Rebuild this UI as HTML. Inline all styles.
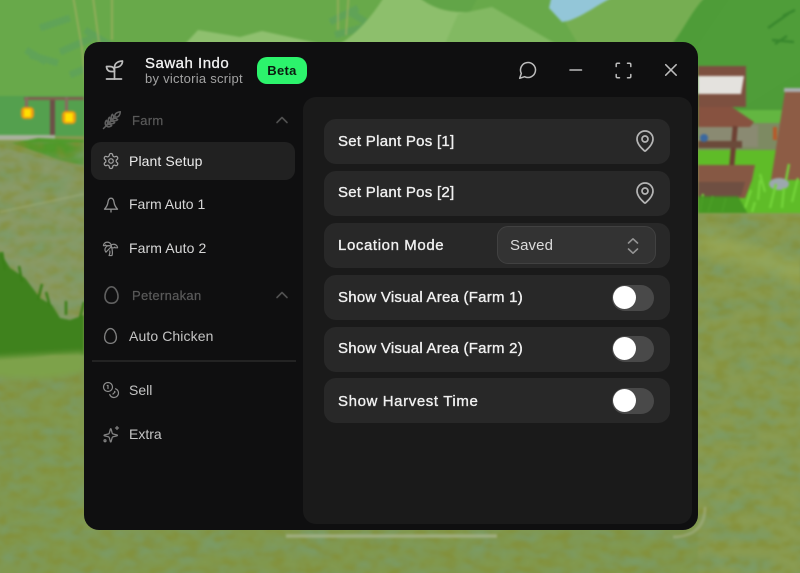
<!DOCTYPE html>
<html lang="en"><head><meta charset="utf-8"><title>Sawah Indo</title>
<style>
html,body{margin:0;padding:0;background:#7f9a55}
#root{position:relative;width:800px;height:573px;overflow:hidden;font-family:"Liberation Sans",sans-serif}
#bg{position:absolute;left:0;top:0}
.abs{position:absolute}
#win{position:absolute;left:84px;top:42px;width:614px;height:488px;border-radius:15px;background:#0f0f10}
#panel{position:absolute;left:303px;top:97px;width:389px;height:427px;border-radius:13px;background:#1a1a1a}
.row{position:absolute;left:324px;width:346px;height:45px;border-radius:12px;background:#282828}
.rt{position:absolute;left:338px;color:#f0f0f0;font-size:15px;line-height:20px;white-space:nowrap;-webkit-text-stroke:.35px #f0f0f0}
.nav{position:absolute;left:129px;color:#d6d6d6;font-size:14px;line-height:18px;white-space:nowrap;letter-spacing:.1px}
.sec{position:absolute;left:132px;color:#5a5a5a;font-size:13px;line-height:16px;white-space:nowrap;letter-spacing:.3px;-webkit-text-stroke:.2px #5a5a5a}
.tr{position:absolute;left:612px;width:42px;height:26px;border-radius:13px;background:#494949}
.kn{position:absolute;left:613px;width:23px;height:23px;border-radius:50%;background:#fff}
svg.i{position:absolute;fill:none;stroke-linecap:round;stroke-linejoin:round}
</style></head><body><div id="root">
<svg id="bg" width="800" height="573" viewBox="0 0 800 573">
<defs>
<filter id="all" filterUnits="userSpaceOnUse" x="-20" y="-20" width="840" height="613" color-interpolation-filters="sRGB"><feGaussianBlur stdDeviation="1"/></filter>
<filter id="b3" x="-30%" y="-30%" width="160%" height="160%" color-interpolation-filters="sRGB"><feGaussianBlur stdDeviation="3"/></filter>
<filter id="b8" filterUnits="userSpaceOnUse" x="0" y="0" width="800" height="573" color-interpolation-filters="sRGB"><feGaussianBlur stdDeviation="7"/></filter>
<filter id="tex" filterUnits="userSpaceOnUse" x="-20" y="0" width="840" height="600" color-interpolation-filters="sRGB"><feTurbulence type="fractalNoise" baseFrequency=".03 .07" numOctaves="3" seed="7"/><feColorMatrix type="matrix" values="0 0 0 0 .48  0 0 0 0 .61  0 0 0 0 .41  3 0 0 0 -1.2"/><feGaussianBlur stdDeviation="1.2"/></filter>
<filter id="tex2" filterUnits="userSpaceOnUse" x="-20" y="0" width="840" height="600" color-interpolation-filters="sRGB"><feTurbulence type="fractalNoise" baseFrequency=".07 .12" numOctaves="3" seed="21"/><feColorMatrix type="matrix" values="0 0 0 0 .52  0 0 0 0 .55  0 0 0 0 .18  0 3 0 0 -1.3"/><feGaussianBlur stdDeviation="1"/></filter>
<clipPath id="gclip"><path d="M-20 142H84V530H698V214H820V590H-20Z"/></clipPath>
</defs>
<g filter="url(#all)">
<rect x="-20" y="-20" width="840" height="613" fill="#84994f"/>
<rect x="-20" y="-20" width="840" height="156" fill="#68a94a"/>
<!-- foliage stripes -->
<g stroke="#5a9f62" stroke-width="7" fill="none" opacity=".55">
<path d="M40 28l30-10M60 52l32-14M30 55l28 8M26 50l20 12M85 30l30 18M70 75l24-10"/>
<path d="M330 22l28-14M335 35l30-8M350 12l22 14"/>
</g>
<g stroke="#a6b063" stroke-width="1.600" fill="none" opacity=".8">
<path d="M72 -10l10 58 4 40M92 -10l8 60M112 -10v50M349 -10l-3 45M338 -10v40"/>
</g>
<!-- tent / hills -->
<path d="M185 44L198 30 240 37 262 31 322 44Z" fill="#8fc06f"/>
<path d="M340 44Q368 26 388 -10H412Q432 14 470 12L492 7 556 44Z" fill="#8dbf6c"/>
<path d="M412 -10Q432 14 470 12L482 -10Z" fill="#62a548"/>
<path d="M445 44L458 14 492 7 556 44Z" fill="#82b962"/>
<path d="M553 -10H622L592 17 562 22 549 8Z" fill="#93c6d8"/>
<path d="M565 22C592 14 612 -10 640 -10H715L680 44H578Z" fill="#76ae52"/>
<path d="M672 44C688 25 700 -10 722 -10H820V140H698Z" fill="#4e9c38"/>
<path d="M698 44V132C730 118 770 90 820 60V-10H735Z" fill="#4f9d39"/>
<g stroke="#2f7d28" stroke-width="2.500" fill="none" opacity=".7">
<path d="M768 28l20-14M772 40l22 2M775 44l12-8M795 10l-12 6"/>
</g>
<!-- stall -->
<rect x="698" y="122" width="122" height="50" fill="#7d8a62"/>
<rect x="730" y="110" width="60" height="13" fill="#63b641"/>
<rect x="698" y="125" width="60" height="22" fill="#8a8a72"/>
<rect x="698" y="150" width="122" height="70" fill="#5fbc28"/>
<rect x="698" y="66" width="48" height="41" fill="#7d5040"/>
<path d="M698 76H744L741 94H698Z" fill="#e4e2de"/>
<path d="M698 107H732L754 122 750 127H698Z" fill="#875240"/>
<rect x="731" y="126" width="5" height="40" fill="#6d4033" transform="rotate(5 733 146)"/>
<rect x="698" y="141" width="44" height="7" fill="#6b4a3a"/>
<circle cx="704" cy="138" r="4" fill="#3a68a0"/>
<path d="M698 165H755L752 180 745 198H698Z" fill="#865844"/>
<path d="M698 182H745L741 196H698Z" fill="#6f4f42"/>
<path d="M785 91H820V180H771Z" fill="#8d5c45"/>
<rect x="784" y="88" width="30" height="4" fill="#a9aeb1"/>
<ellipse cx="779" cy="184" rx="10" ry="6" fill="#9ca8ae"/>
<rect x="773" y="127" width="4" height="13" fill="#b85a2a"/>
<g stroke="#74d43a" stroke-width="2.400" fill="none">
<path d="M700 212l3-18M708 212l5-16M722 212l4-14M745 208l6-18M758 200l2-20M770 208l6-24M782 208l2-20M792 202l6-24M765 192l-5-18M786 180l3-16M752 212l3-10"/>
</g>
<path d="M698 196L738 196 748 214H698Z" fill="#3f8e20" opacity=".8"/>
<!-- left path + lanterns -->
<rect x="-20" y="96" width="104" height="40" fill="#54a04e"/>
<rect x="24" y="97" width="60" height="3" fill="#80604f"/>
<rect x="25" y="97" width="3" height="12" fill="#8a6a60"/>
<rect x="65" y="97" width="3" height="14" fill="#8a6a60"/>
<rect x="50" y="100" width="5" height="38" fill="#6d4f48"/>
<rect x="21" y="107" width="13" height="12" rx="4" fill="#ee9a14"/>
<rect x="24" y="109" width="7" height="8" fill="#ffe000"/>
<rect x="62" y="111" width="14" height="13" rx="4" fill="#ee9a14"/>
<rect x="65" y="113" width="8" height="9" fill="#ffe000"/>
<rect x="-20" y="135" width="75" height="5" fill="#a9b19d"/>
<path d="M12 143L38 138 84 140V166L60 160Z" fill="#4f9a2a"/>
<!-- ground -->
<path d="M-20 142L50 160 84 165V352H-20Z" fill="#8a9b68"/>
<rect x="-20" y="352" width="840" height="241" fill="#82994f"/>
<rect x="698" y="213" width="122" height="380" fill="#8a9c52"/>
<g clip-path="url(#gclip)">
<rect x="-20" y="140" width="840" height="460" filter="url(#tex)" opacity=".8"/>
<rect x="-20" y="140" width="840" height="460" filter="url(#tex2)" opacity=".6"/>
</g>
<path d="M0 212L84 194" stroke="#a5b07c" stroke-width="2" opacity=".45" fill="none"/>
<path d="M698 228L820 268V290L698 248Z" fill="#a4b25a" opacity=".5" filter="url(#b8)"/>
<!-- left tuft -->
<path d="M-20 252H0L10 268 25 278 40 298 52 305 60 318 70 320 84 315V355H52L30 358 0 360H-20Z" fill="#3f821d"/>
<g stroke="#3a7f17" stroke-width="2.500" fill="none">
<path d="M5 270l-3-18M22 282l-3-16M38 300l4-16M66 315l0-14M80 318l4-16M50 306l-4-14"/>
</g>
<path d="M-20 358L84 352V372L50 378 10 378 -20 372Z" fill="#7da24a" filter="url(#b3)"/>
<!-- outline around window -->
<path d="M286 536H497" stroke="#a9b690" stroke-width="3.500" fill="none" opacity=".75"/>
<path d="M705 507Q705 536 673 537" stroke="#a9b690" stroke-width="3" fill="none" opacity=".5"/>
</g>
</svg>

<div id="win"></div>
<div id="panel"></div>

<!-- header -->
<svg class="i" style="left:103px;top:59px" width="22" height="22" viewBox="0 0 22 22" stroke="#bdbdbd" stroke-width="1.700"><path d="M3.500 20H18.500"/><path d="M11.500 20V8"/><path d="M3.500 7.500H7C10 7.500 11.500 9.500 11.500 12.500H8C5.500 12.500 3.500 10.500 3.500 7.500Z"/><path d="M11.500 8.500C11.500 5 14 2.300 19.500 2 19.500 5.500 17 8.500 12 8.500"/></svg>
<div class="abs" style="left:145px;top:55px;color:#f2f2f2;font-size:15px;line-height:18px;white-space:nowrap;-webkit-text-stroke:.3px #f2f2f2;letter-spacing:.5px">Sawah Indo</div>
<div class="abs" style="left:145px;top:71px;color:#a3a3a3;font-size:13px;line-height:16px;white-space:nowrap;letter-spacing:.26px">by victoria script</div>
<div class="abs" style="left:257px;top:57px;width:50px;height:27px;border-radius:10px;background:#2cf36c;color:#0b1a10;font-size:13px;font-weight:bold;line-height:28px;text-align:center;letter-spacing:.3px">Beta</div>

<svg class="i" style="left:518px;top:60px" width="20" height="20" viewBox="0 0 24 24" stroke="#bcbcbc" stroke-width="1.800"><path d="M7.900 20A9 9 0 1 0 4 16.100L2 22Z"/></svg>
<svg class="i" style="left:568px;top:67px" width="15" height="6" viewBox="0 0 15 6" stroke="#bcbcbc" stroke-width="1.600"><path d="M2 3H13.500"/></svg>
<svg class="i" style="left:615px;top:61.500px" width="17" height="17" viewBox="0 0 17 17" stroke="#bcbcbc" stroke-width="1.500"><path d="M1.200 4.500V2.500Q1.200 1.200 2.500 1.200H4.500M12.500 1.200H14.500Q15.800 1.200 15.800 2.500V4.500M15.800 12.500V14.500Q15.800 15.800 14.500 15.800H12.500M4.500 15.800H2.500Q1.200 15.800 1.200 14.500V12.500"/></svg>
<svg class="i" style="left:664px;top:63px" width="14" height="14" viewBox="0 0 14 14" stroke="#bcbcbc" stroke-width="1.500"><path d="M1.700 1.700L12.200 12.200M12.200 1.700L1.700 12.200"/></svg>

<!-- sidebar -->
<div class="abs" style="left:91px;top:142px;width:204px;height:38px;border-radius:10px;background:#212121"></div>

<svg class="i" style="left:102px;top:110px" width="20" height="20" viewBox="0 0 20 20" stroke="#606060" stroke-width="1.500"><path d="M1.500 18.500L12 8"/><path d="M4.200 15.800C2.800 14.200 2.800 11.800 4.400 10.300 6 11.800 6 14.200 4.200 15.800Z"/><path d="M4.200 15.800C5.800 17.300 8.200 17.200 9.700 15.600 8.200 14 5.800 14 4.200 15.800Z"/><path d="M7.200 12.800C5.800 11.200 5.800 8.800 7.400 7.300 9 8.800 9 11.200 7.200 12.800Z"/><path d="M7.200 12.800C8.800 14.300 11.200 14.200 12.700 12.600 11.200 11 8.800 11 7.200 12.800Z"/><path d="M10.200 9.800C8.800 8.200 8.800 5.800 10.400 4.300 12 5.800 12 8.200 10.200 9.800Z"/><path d="M10.200 9.800C11.800 11.300 14.200 11.200 15.700 9.600 14.200 8 11.800 8 10.200 9.800Z"/><path d="M13 7C12.300 4.500 13.500 2.500 18.300 1.700 18 6 15.800 7.600 13 7Z"/></svg>
<div class="sec" style="top:113px">Farm</div>
<svg class="i" style="left:275px;top:114px" width="14" height="12" viewBox="0 0 14 12" stroke="#505050" stroke-width="1.600"><path d="M2 8.500L7 3.500 12 8.500"/></svg>

<svg class="i" style="left:102px;top:152px" width="18" height="18" viewBox="0 0 24 24" stroke="#a0a0a0" stroke-width="1.700"><path d="M12.220 2h-.44a2 2 0 0 0-2 2v.18a2 2 0 0 1-1 1.730l-.43.25a2 2 0 0 1-2 0l-.15-.08a2 2 0 0 0-2.730.73l-.22.38a2 2 0 0 0 .73 2.730l.15.1a2 2 0 0 1 1 1.720v.51a2 2 0 0 1-1 1.740l-.15.09a2 2 0 0 0-.73 2.730l.22.38a2 2 0 0 0 2.730.73l.15-.08a2 2 0 0 1 2 0l.43.25a2 2 0 0 1 1 1.730V20a2 2 0 0 0 2 2h.44a2 2 0 0 0 2-2v-.18a2 2 0 0 1 1-1.730l.43-.25a2 2 0 0 1 2 0l.15.08a2 2 0 0 0 2.730-.73l.22-.39a2 2 0 0 0-.73-2.730l-.15-.08a2 2 0 0 1-1-1.740v-.5a2 2 0 0 1 1-1.740l.15-.09a2 2 0 0 0 .73-2.730l-.22-.38a2 2 0 0 0-2.730-.73l-.15.08a2 2 0 0 1-2 0l-.43-.25a2 2 0 0 1-1-1.730V4a2 2 0 0 0-2-2z"/><circle cx="12" cy="12" r="3"/></svg>
<div class="nav" style="top:152px;color:#ececec">Plant Setup</div>

<svg class="i" style="left:103px;top:197px" width="16" height="16" viewBox="0 0 16 16" stroke="#8e8e8e" stroke-width="1.300"><path d="M8 1.200C5.800 1.200 5.200 3 4.900 5.500 4.600 8 3.500 10 1.500 12.200H14.500C12.500 10 11.400 8 11.100 5.500 10.800 3 10.200 1.200 8 1.200Z"/><path d="M8 12.400V15"/></svg>
<div class="nav" style="top:195px;letter-spacing:0">Farm Auto 1</div>

<svg class="i" style="left:102px;top:240px" width="17" height="17" viewBox="0 0 24 24" stroke="#8e8e8e" stroke-width="1.700"><path d="M13 8c0-2.760-2.460-5-5.500-5S2 5.240 2 8h2l1-1 1 1h4"/><path d="M13 7.140A5.820 5.820 0 0 1 16.500 6c3.040 0 5.500 2.240 5.500 5h-3l-1-1-1 1h-3"/><path d="M5.890 9.710c-2.150 2.150-2.300 5.470-.35 7.430l4.240-4.250.7-.7.71-.71 2.120-2.120c-1.950-1.960-5.270-1.800-7.420.35"/><path d="M11 15.500c.5 2.500-.17 4.500-1 6.500h4c2-5.500-.5-12-1-14"/></svg>
<div class="nav" style="top:239px">Farm Auto 2</div>

<svg class="i" style="left:101px;top:284px" width="21" height="21" viewBox="0 0 21 21" stroke="#606060" stroke-width="1.600"><path d="M10.500 19.200C15.500 19.200 17.200 15.500 17 11.800 16.700 7.500 14 2.800 10.500 2.800 7 2.800 4.300 7.500 4 11.800 3.800 15.500 5.500 19.200 10.500 19.200Z"/></svg>
<div class="sec" style="top:288px">Peternakan</div>
<svg class="i" style="left:275px;top:289px" width="14" height="12" viewBox="0 0 14 12" stroke="#505050" stroke-width="1.600"><path d="M2 8.500L7 3.500 12 8.500"/></svg>

<svg class="i" style="left:101px;top:326px" width="19" height="19" viewBox="0 0 21 21" stroke="#808080" stroke-width="1.500"><path d="M10.500 19.200C15.500 19.200 17.200 15.500 17 11.800 16.700 7.500 14 2.800 10.500 2.800 7 2.800 4.300 7.500 4 11.800 3.800 15.500 5.500 19.200 10.500 19.200Z"/></svg>
<div class="nav" style="top:327px;color:#c4c4c4">Auto Chicken</div>

<div class="abs" style="left:92px;top:360px;width:204px;height:2px;background:#232323"></div>

<svg class="i" style="left:102px;top:381px" width="18" height="18" viewBox="0 0 24 24" stroke="#8e8e8e" stroke-width="1.600"><circle cx="8" cy="8" r="6"/><path d="M18.090 10.370A6 6 0 1 1 10.340 18"/><path d="M7 6h1v4"/><path d="m16.710 13.880.7.71-2.820 2.820"/></svg>
<div class="nav" style="top:381px;color:#c4c4c4;letter-spacing:0">Sell</div>

<svg class="i" style="left:102px;top:425px" width="18" height="18" viewBox="0 0 24 24" stroke="#828282" stroke-width="1.700"><path d="M9.800 17A2 2 0 0 0 8.400 15.600L3 14.300a.5.5 0 0 1 0-.9L8.400 12A2 2 0 0 0 9.800 10.600L11.200 5.300a.5.5 0 0 1 .9 0L13.500 10.600A2 2 0 0 0 14.900 12L20.300 13.400a.5.5 0 0 1 0 .9L14.900 15.600a2 2 0 0 0-1.400 1.400L12.100 22.300a.5.5 0 0 1-.9 0z"/><path d="M20 2V6M18 4H22"/><circle cx="4" cy="21" r="1.300"/></svg>
<div class="nav" style="top:425px;color:#c4c4c4;letter-spacing:0">Extra</div>

<!-- rows -->
<div class="row" style="top:119px"></div>
<div class="row" style="top:171px"></div>
<div class="row" style="top:223px"></div>
<div class="row" style="top:275px"></div>
<div class="row" style="top:327px"></div>
<div class="row" style="top:378px"></div>

<div class="rt" style="top:132px;letter-spacing:.28px">Set Plant Pos [1]</div>
<div class="rt" style="top:183px;letter-spacing:.28px">Set Plant Pos [2]</div>
<div class="rt" style="top:236px;letter-spacing:.6px">Location Mode</div>
<div class="rt" style="top:288px;letter-spacing:.24px">Show Visual Area (Farm 1)</div>
<div class="rt" style="top:339px;letter-spacing:.24px">Show Visual Area (Farm 2)</div>
<div class="rt" style="top:392px;letter-spacing:.61px">Show Harvest Time</div>

<svg class="i" style="left:633px;top:129px" width="24" height="24" viewBox="0 0 24 24" stroke="#b5b5b5" stroke-width="1.700"><path d="M20 10c0 4.993-5.539 10.193-7.399 11.799a1 1 0 0 1-1.202 0C9.539 20.193 4 14.993 4 10a8 8 0 0 1 16 0"/><circle cx="12" cy="10" r="3"/></svg>
<svg class="i" style="left:633px;top:181px" width="24" height="24" viewBox="0 0 24 24" stroke="#b5b5b5" stroke-width="1.700"><path d="M20 10c0 4.993-5.539 10.193-7.399 11.799a1 1 0 0 1-1.202 0C9.539 20.193 4 14.993 4 10a8 8 0 0 1 16 0"/><circle cx="12" cy="10" r="3"/></svg>

<div class="abs" style="left:497px;top:226px;width:157px;height:36px;border:1px solid #414141;border-radius:11px;background:#333333"></div>
<div class="abs" style="left:510px;top:236px;color:#dcdcdc;font-size:15px;line-height:20px;letter-spacing:.1px">Saved</div>
<svg class="i" style="left:626px;top:237px" width="14" height="18" viewBox="0 0 14 18" stroke="#949494" stroke-width="1.600"><path d="M2.500 6L7 1.800 11.500 6M2.500 12L7 16.200 11.500 12"/></svg>

<div class="tr" style="top:285px"></div><div class="kn" style="top:286px"></div>
<div class="tr" style="top:336px"></div><div class="kn" style="top:337px"></div>
<div class="tr" style="top:388px"></div><div class="kn" style="top:389px"></div>
</div></body></html>
